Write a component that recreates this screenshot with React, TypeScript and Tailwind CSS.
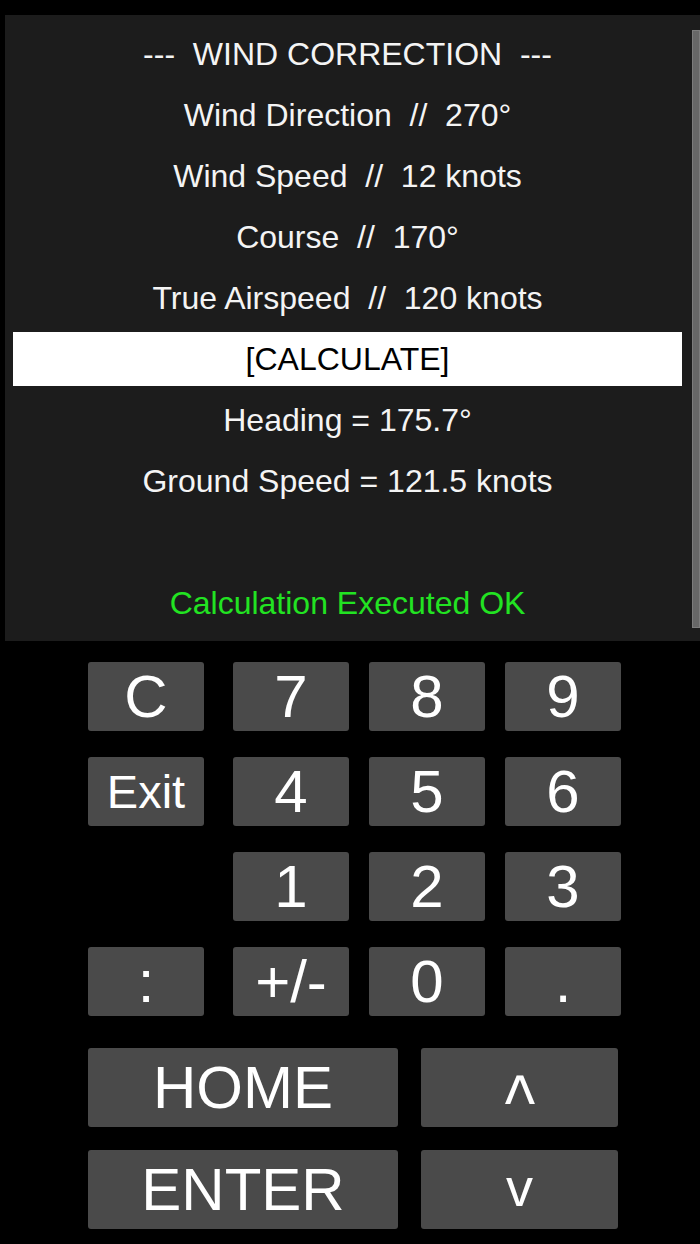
const FONT = "font-['Liberation_Sans',Arial,sans-serif]";

const LINES = [
  "---  WIND CORRECTION  ---",
  "Wind Direction  //  270°",
  "Wind Speed  //  12 knots",
  "Course  //  170°",
  "True Airspeed  //  120 knots",
];

function Line({ children, className = "" }: { children?: React.ReactNode; className?: string }) {
  return (
    <div className={`flex h-[54px] items-center justify-center whitespace-pre text-[32px] leading-none ${className}`}>
      {children}
    </div>
  );
}

function Key({ label, className = "" }: { label: React.ReactNode; className?: string }) {
  return (
    <button
      type="button"
      className={`flex items-center justify-center rounded-[3px] bg-[#4a4a4a] leading-none text-white ${className}`}
    >
      {label}
    </button>
  );
}

export default function App() {
  return (
    <div className={`h-[1244px] w-[700px] overflow-hidden bg-black ${FONT}`}>
      {/* display panel */}
      <div className="ml-[5px] mt-[15px] flex h-[626px] bg-[#1c1c1c]">
        <div className="flex flex-1 flex-col gap-[7px] pl-2 pt-3 text-[#f4f4f4]">
          {LINES.map((l) => (
            <Line key={l}>{l}</Line>
          ))}
          <Line className="bg-white text-black">[CALCULATE]</Line>
          <Line>Heading = 175.7°</Line>
          <Line>Ground Speed = 121.5 knots</Line>
          <Line />
          <Line className="text-[#22e322]">Calculation Executed OK</Line>
        </div>
        <div className="ml-[10px] mt-[15px] h-[598px] w-[8px] border border-[#7c7c7c] bg-[#676767]" />
      </div>

      {/* keypad */}
      <div className="ml-[88px] mt-[21px] grid grid-cols-[125px_116px_116px_116px] grid-rows-[69px_69px_69px_69px] gap-x-5 gap-y-[26px] text-[60px]">
        <Key label="C" className="w-[116px]" />
        <Key label="7" />
        <Key label="8" />
        <Key label="9" />

        <Key label="Exit" className="w-[116px] text-[47px]" />
        <Key label="4" />
        <Key label="5" />
        <Key label="6" />

        <div />
        <Key label="1" />
        <Key label="2" />
        <Key label="3" />

        <Key label=":" className="w-[116px]" />
        <Key label="+/-" />
        <Key label="0" />
        <Key label="." />
      </div>

      <div className="ml-[88px] mt-[32px] grid grid-cols-[310px_197px] grid-rows-[79px_79px] gap-x-[23px] gap-y-[23px] text-[60px]">
        <Key label="HOME" />
        <Key
          label={<span className="inline-block origin-center scale-x-90 scale-y-[1.1] translate-y-[14px]">^</span>}
          className="text-[72px]"
        />
        <Key label="ENTER" />
        <Key label="v" className="pb-[6px] text-[54px]" />
      </div>
    </div>
  );
}
